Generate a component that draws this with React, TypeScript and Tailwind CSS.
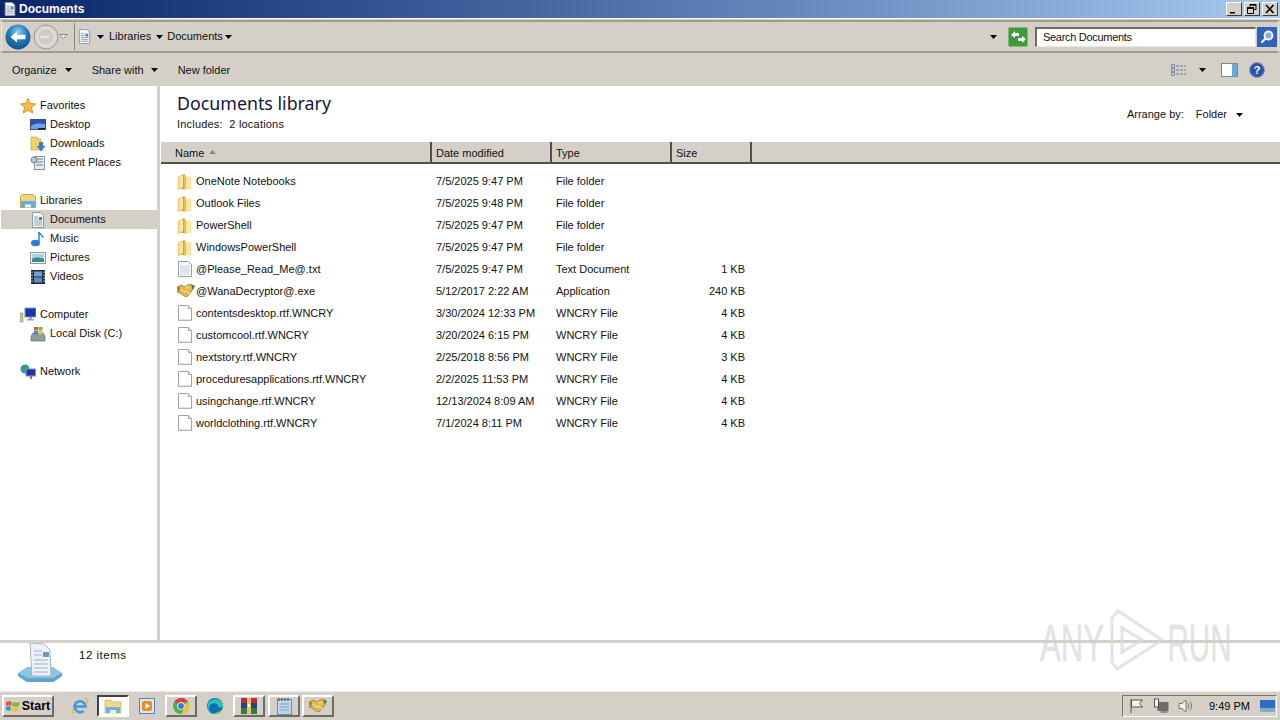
import React from "react";

const Caret = ({ className = "" }: { className?: string }) => (
  <svg width="7" height="4" viewBox="0 0 7 4" className={`shrink-0 ${className}`}>
    <path d="M0 0h7L3.500 4z" fill="#000" />
  </svg>
);

const DocIcon = ({ s = 16 }: { s?: number }) => (
  <svg width={s} height={s} viewBox="0 0 16 16" className="shrink-0">
    <path d="M2.500.5h8l3 3v12h-11z" fill="#f4f7fa" stroke="#8f9aa6" />
    <path d="M4 5h4M4 7h4M4 9h8M4 11h8M4 13h8" stroke="#8fa0b3" />
    <rect x="9" y="5" width="3" height="3" fill="#4f7fa8" />
  </svg>
);

const Folder = () => (
  <svg width="16" height="17" viewBox="0 0 16 17">
    <path d="M1 4 6 1.500V15L1 16.500z" fill="#f3dc8e" stroke="#d8b650" strokeWidth=".5" />
    <path d="M6 1.500h2v14.500H4z" fill="#d8a22e" />
    <path d="M7.500 3.500h7v13h-7z" fill="#f7e7a2" />
    <path d="M3.500 4 6 2.500V14l-2.500 1.500z" fill="#f7e7a2" />
    <path d="M7.500 3.500h1.500v13H7.500z" fill="#e5bb4c" />
  </svg>
);

const TextFile = () => (
  <svg width="16" height="16" viewBox="0 0 16 16">
    <path d="M1.500.5h10l3 3v12h-13z" fill="#f8fafc" stroke="#9aa0a6" />
    <path d="M3 5h10M3 7h10M3 9h10M3 11h10M3 13h10" stroke="#c2cfdf" />
  </svg>
);

const BlankFile = () => (
  <svg width="16" height="16" viewBox="0 0 16 16">
    <path d="M1.500.5h10l3 3v12h-13z" fill="#fff" stroke="#a3a3a3" />
    <path d="M11.500.5v3h3" fill="#eee" stroke="#a3a3a3" />
    <path d="M2 15h12" stroke="#c8c8c8" />
  </svg>
);

const Handshake = () => (
  <svg width="18" height="14" viewBox="0 0 18 14">
    <path d="M0 3l4-2 4 2 4-3 4 2-1 5-5 6-3-1-4-3-3-1z" fill="#e4b94c" stroke="#7d6222" strokeWidth=".6" />
    <path d="M4 5l3 3 3-1 3 3M9 3l3 1" stroke="#fff2b8" fill="none" />
    <path d="M14 0l4 2-2 4z" fill="#4f7d3b" />
    <path d="M0 3l2 6 1-6z" fill="#a87a2a" />
  </svg>
);

const Star = () => (
  <svg width="16" height="16" viewBox="0 0 16 16">
    <path d="M8 .5l2.300 5 5.200.5-4 3.500 1.200 5.500L8 12.200 3.300 15l1.200-5.500-4-3.500 5.200-.5z" fill="#f6bf3f" stroke="#d8913a" />
  </svg>
);

const DesktopIcon = () => (
  <svg width="16" height="16" viewBox="0 0 16 16">
    <rect x=".5" y="2.500" width="15" height="10" fill="#2a55b0" stroke="#444d6a" />
    <path d="M1 9c4-3 8-3 14-2v5H1z" fill="#6fa3e8" />
    <path d="M8 11h7v1.500H8z" fill="#222" />
  </svg>
);

const DownloadsIcon = () => (
  <svg width="16" height="16" viewBox="0 0 16 16">
    <path d="M1 1h6l1 2h3v11H1z" fill="#f0cf6c" stroke="#c29a3a" strokeWidth=".6" />
    <path d="M9 6h4v4h2.500L11 15.500 6.500 10H9z" fill="#2f7fd0" />
  </svg>
);

const RecentIcon = () => (
  <svg width="16" height="16" viewBox="0 0 16 16">
    <rect x="4.500" y="1.500" width="10" height="13" fill="#e8ecf0" stroke="#8a949e" />
    <path d="M6 4h7M6 7h7M6 10h7" stroke="#8fa2b5" strokeWidth="1.400" />
    <circle cx="4" cy="5" r="3" fill="#b7c6d6" stroke="#768593" />
  </svg>
);

const LibrariesIcon = () => (
  <svg width="16" height="16" viewBox="0 0 16 16">
    <path d="M.5 3.500 2 1.500h11l1 2h1.500v11H.5z" fill="#f0d880" stroke="#c3a747" />
    <path d="M1 8h14v6.500H1z" fill="#5fb0dc" />
    <path d="M5 14.500v-3h6v3" fill="#f0f6fb" />
  </svg>
);

const MusicIcon = () => (
  <svg width="16" height="16" viewBox="0 0 16 16">
    <path d="M9 1v10" stroke="#2f7fd0" strokeWidth="1.500" />
    <path d="M9 1c1 3 4 3 4 6" stroke="#2f7fd0" fill="none" strokeWidth="1.300" />
    <ellipse cx="5.500" cy="12" rx="4.500" ry="3.200" fill="#2a7fd0" />
  </svg>
);

const PicturesIcon = () => (
  <svg width="16" height="16" viewBox="0 0 16 16">
    <rect x=".5" y="2.500" width="15" height="11" fill="#eef2f5" stroke="#8d98a3" />
    <rect x="2" y="4" width="12" height="8" fill="#a7cfe8" />
    <path d="M2 9c3-2 7-2 12 0v3H2z" fill="#3f8a7a" />
  </svg>
);

const VideosIcon = () => (
  <svg width="16" height="16" viewBox="0 0 16 16">
    <rect x="1" y="1" width="14" height="14" fill="#222c38" />
    <rect x="4" y="2.500" width="8" height="5" fill="#6fa3d8" />
    <rect x="4" y="8.500" width="8" height="5" fill="#5b8fc4" />
    <path d="M2 2.500v11M14 2.500v11" stroke="#e8e8e8" strokeDasharray="1.500 1.500" />
  </svg>
);

const ComputerIcon = () => (
  <svg width="16" height="16" viewBox="0 0 16 16">
    <rect x="5" y="1" width="11" height="9" fill="#1d33a8" stroke="#8c96a8" />
    <path d="M9 10h3v2h2v1.500H7V12h2z" fill="#9aa4b2" />
    <rect x="0" y="6" width="3" height="9" fill="#b9c89a" stroke="#7c8a6a" strokeWidth=".5" />
  </svg>
);

const DiskIcon = () => (
  <svg width="16" height="16" viewBox="0 0 16 16">
    <path d="M1 10l2-3h10l2 3v5H1z" fill="#8f9aa0" stroke="#5c666c" strokeWidth=".6" />
    <rect x="4" y="1" width="4" height="3.500" fill="#e45a28" />
    <rect x="8.500" y="1" width="4" height="3.500" fill="#74b83c" />
    <rect x="4" y="5" width="4" height="3.500" fill="#3b8be0" />
    <rect x="8.500" y="5" width="4" height="3.500" fill="#f1c232" />
  </svg>
);

const NetworkIcon = () => (
  <svg width="16" height="16" viewBox="0 0 16 16">
    <circle cx="5" cy="5" r="4.500" fill="#2e9c95" />
    <rect x="6" y="5" width="9.500" height="7" fill="#1d33a8" stroke="#8c96a8" />
    <path d="M10 12h2v3h-2z" fill="#6c7a8c" />
  </svg>
);

const NavItem = ({
  icon,
  label,
  sub,
  active,
}: {
  icon: React.ReactNode;
  label: string;
  sub?: boolean;
  active?: boolean;
}) => (
  <div
    className={`h-[19px] flex items-center gap-[4px] ${sub ? "pl-[30px]" : "pl-[20px]"} ${
      active ? "bg-[#d4d0c8] ml-[1px] !pl-[29px]" : ""
    }`}
  >
    <span className="w-[16px] h-[16px] shrink-0 flex">{icon}</span>
    <span>{label}</span>
  </div>
);

type Row = { icon: React.ReactNode; name: string; date: string; type: string; size: string };
const F = <Folder />;
const B = <BlankFile />;
const rows: Row[] = [
  { icon: F, name: "OneNote Notebooks", date: "7/5/2025 9:47 PM", type: "File folder", size: "" },
  { icon: F, name: "Outlook Files", date: "7/5/2025 9:48 PM", type: "File folder", size: "" },
  { icon: F, name: "PowerShell", date: "7/5/2025 9:47 PM", type: "File folder", size: "" },
  { icon: F, name: "WindowsPowerShell", date: "7/5/2025 9:47 PM", type: "File folder", size: "" },
  { icon: <TextFile />, name: "@Please_Read_Me@.txt", date: "7/5/2025 9:47 PM", type: "Text Document", size: "1 KB" },
  { icon: <Handshake />, name: "@WanaDecryptor@.exe", date: "5/12/2017 2:22 AM", type: "Application", size: "240 KB" },
  { icon: B, name: "contentsdesktop.rtf.WNCRY", date: "3/30/2024 12:33 PM", type: "WNCRY File", size: "4 KB" },
  { icon: B, name: "customcool.rtf.WNCRY", date: "3/20/2024 6:15 PM", type: "WNCRY File", size: "4 KB" },
  { icon: B, name: "nextstory.rtf.WNCRY", date: "2/25/2018 8:56 PM", type: "WNCRY File", size: "3 KB" },
  { icon: B, name: "proceduresapplications.rtf.WNCRY", date: "2/2/2025 11:53 PM", type: "WNCRY File", size: "4 KB" },
  { icon: B, name: "usingchange.rtf.WNCRY", date: "12/13/2024 8:09 AM", type: "WNCRY File", size: "4 KB" },
  { icon: B, name: "worldclothing.rtf.WNCRY", date: "7/1/2024 8:11 PM", type: "WNCRY File", size: "4 KB" },
];

const Head = ({ w, label, sort }: { w: string; label: string; sort?: boolean }) => (
  <div className={`${w} h-full flex items-center gap-[5px] pl-[4px] border-r-2 border-[#555049] shrink-0 pt-[2px]`}>
    <span>{label}</span>
    {sort && (
      <svg width="7" height="4" viewBox="0 0 7 4" className="mb-[2px]">
        <path d="M0 4L3.500 0 7 4z" fill="#8a8a8a" />
      </svg>
    )}
  </div>
);

const TaskBtn = ({ children, active }: { children: React.ReactNode; active?: boolean }) => (
  <div
    className={`w-[32px] h-[22px] flex items-center justify-center border-2 shrink-0 ${
      active
        ? "bg-white border-t-[#404040] border-l-[#404040] border-r-white border-b-white"
        : "bg-[#d4d0c8] border-t-white border-l-white border-r-[#6e6a64] border-b-[#6e6a64]"
    }`}
  >
    {children}
  </div>
);

const IEIcon = () => (
  <svg width="18" height="18" viewBox="0 0 18 18" className="shrink-0">
    <path d="M4 9.500h10.500a5.500 5.500 0 1 0-2 4.500" fill="none" stroke="#3a9ae0" strokeWidth="2.600" />
    <path d="M13 2c4-2 5 1 2 6M5 14c-3 3-5 2-3-2" stroke="#e8b838" strokeWidth="1.200" fill="none" />
  </svg>
);
const ExplorerIcon = () => (
  <svg width="18" height="16" viewBox="0 0 18 16">
    <path d="M1 2h6l1 2h9v11H1z" fill="#efd98a" stroke="#b8a050" strokeWidth=".6" />
    <path d="M2 9h14v6H2z" fill="#6fb4d8" />
    <path d="M6 15v-3h6v3" fill="#e8f2f8" />
  </svg>
);
const MediaIcon = () => (
  <svg width="16" height="16" viewBox="0 0 16 16" className="shrink-0">
    <rect x=".5" y=".5" width="15" height="15" fill="#dfe8f0" stroke="#4f86c0" />
    <rect x="3" y="3" width="10" height="10" rx="2" fill="#ef8a1f" />
    <path d="M6.500 5v6L11 8z" fill="#fff" />
  </svg>
);
const ChromeIcon = () => (
  <svg width="18" height="18" viewBox="0 0 18 18">
    <circle cx="9" cy="9" r="8" fill="#4caf50" />
    <path d="M9 1a8 8 0 0 1 7 4H9a4 4 0 0 0-3.500 2L2.800 4A8 8 0 0 1 9 1z" fill="#e53935" />
    <path d="M16 5a8 8 0 0 1-7 12l3.500-6A4 4 0 0 0 12.500 7z" fill="#fbc02d" />
    <circle cx="9" cy="9" r="3.800" fill="#fff" />
    <circle cx="9" cy="9" r="2.900" fill="#2f78e0" />
  </svg>
);
const EdgeIcon = () => (
  <svg width="18" height="18" viewBox="0 0 18 18" className="shrink-0">
    <circle cx="9" cy="9" r="8" fill="#0f6fb8" />
    <path d="M2 7c2-6 13-7 15 1 0 3-4 3-5 1 0-3-6-4-8-1-2 3-1 7 3 9-3 0-6-3-5-10z" fill="#2fc4b2" />
    <path d="M8 17c4 1 7-1 8-4-3 2-6 2-8 4z" fill="#69d84f" />
  </svg>
);
const RarIcon = () => (
  <svg width="18" height="16" viewBox="0 0 18 16">
    <rect x="1" y="0" width="16" height="5" fill="#b62d3c" />
    <rect x="1" y="5" width="16" height="5" fill="#30407f" />
    <rect x="1" y="10" width="16" height="6" fill="#2f7d45" />
    <rect x="7" y="0" width="4" height="16" fill="#e4c56a" />
    <rect x="8" y="6" width="2" height="3" fill="#fff" />
  </svg>
);
const NotepadIcon = () => (
  <svg width="15" height="17" viewBox="0 0 15 17">
    <rect x=".5" y="1.500" width="14" height="15" fill="#bcd6ec" stroke="#6e8ca8" />
    <path d="M2 0v3M5 0v3M8 0v3M11 0v3" stroke="#444" />
    <path d="M3 6h9M3 9h9M3 12h9" stroke="#7aa0c4" />
  </svg>
);

export default function App() {
  return (
    <div className="relative w-[1280px] h-[720px] overflow-hidden bg-white flex flex-col text-[11px] text-[#111] font-['Liberation_Sans',sans-serif] leading-none">
      {/* Title bar */}
      <div className="h-[18px] shrink-0 flex items-center bg-gradient-to-r from-[#0a246a] to-[#a6caf0] pl-[3px] pr-[2px] gap-[2px]">
        <DocIcon s={14} />
        <span className="text-white font-bold text-[12px]">Documents</span>
        <div className="ml-auto flex gap-[2px]">
          {["min", "max", "close"].map((k) => (
            <div
              key={k}
              className="w-[16px] h-[14px] bg-[#d4d0c8] border border-t-white border-l-white border-r-[#404040] border-b-[#404040] flex items-center justify-center"
            >
              <svg width="10" height="10" viewBox="0 0 10 10">
                {k === "min" && <path d="M1 8h5v1.500H1z" fill="#000" />}
                {k === "max" && (
                  <g fill="none" stroke="#000">
                    <path d="M3 2.500V.5h6v5H7" />
                    <path d="M3 1.200h6" />
                    <rect x=".5" y="3.500" width="6" height="6" />
                    <path d="M1 4.500h5" />
                  </g>
                )}
                {k === "close" && <path d="M1 1l7.500 8M8.500 1L1 9" stroke="#000" strokeWidth="1.600" />}
              </svg>
            </div>
          ))}
        </div>
      </div>

      {/* Address bar */}
      <div className="h-[36px] shrink-0 bg-[#d4d0c8] border-t border-white flex items-center px-[1px]">
        <div className="flex-1 h-[33px] flex items-center border-y-2 border-t-[#a09c94] border-b-[#a09c94] border-x border-x-[#e8e6e0] pl-[3px] pr-[1px]">
          <svg width="26" height="26" viewBox="0 0 26 26" className="shrink-0">
            <defs>
              <radialGradient id="bk" cx="50%" cy="30%" r="75%">
                <stop offset="0" stopColor="#8fd0f0" />
                <stop offset=".5" stopColor="#1f78b8" />
                <stop offset="1" stopColor="#0d4f86" />
              </radialGradient>
            </defs>
            <circle cx="13" cy="13" r="12.500" fill="url(#bk)" />
            <path d="M5.500 13l6.500-5.500v3.300h8.500v4.400H12v3.300z" fill="#fff" />
          </svg>
          <svg width="26" height="26" viewBox="0 0 26 26" className="shrink-0 ml-[2px]">
            <circle cx="13" cy="13" r="12" fill="#d8d6d0" stroke="#9a968e" />
            <circle cx="13" cy="13" r="8.500" fill="#cfccc5" stroke="#e8e6e0" />
            <path d="M7 12h9v2H7z" fill="#e8e6e0" />
          </svg>
          <svg width="9" height="5" viewBox="0 0 9 5" className="shrink-0">
            <path d="M.5.500h8L4.500 4.500z" fill="#efece6" stroke="#8a8a8a" />
          </svg>
          <div className="ml-[6px] flex-1 h-[27px] flex items-center border-l border-[#8a867e] pl-[2px] pr-[5px]">
            <DocIcon s={15} />
            <Caret className="ml-[5px]" />
            <span className="ml-[5px] mb-[1px]">Libraries</span>
            <Caret className="ml-[5px]" />
            <span className="ml-[4px] mb-[1px]">Documents</span>
            <Caret className="ml-[2px]" />
            <Caret className="ml-auto" />
          </div>
          <div className="w-[20px] h-[20px] ml-[6px] mr-[7px] rounded-[2px] bg-[#3f9a3a] border border-[#7fb97a] flex items-center justify-center shrink-0">
            <svg width="15" height="12" viewBox="0 0 15 12">
              <path d="M0 4l4-4v2h4v3H4v2zM15 8l-4 4v-2H7V7h4V5z" fill="#fff" />
            </svg>
          </div>
          <div className="w-[221px] h-[20px] bg-white border-t-2 border-l-2 border-[#6e6a64] border-r border-b border-r-[#e8e6e0] border-b-[#e8e6e0] flex items-center pl-[6px] shrink-0 tracking-[-0.3px]">
            Search Documents
          </div>
          <div className="w-[20px] h-[20px] ml-[1px] bg-[#2f62b8] flex items-center justify-center shrink-0">
            <svg width="16" height="16" viewBox="0 0 16 16" fill="none">
              <circle cx="9.500" cy="6.500" r="4" stroke="#fff" strokeWidth="1.800" fill="#7fb0e8" />
              <path d="M6.500 9.500l-4 4" stroke="#fff" strokeWidth="2.200" />
            </svg>
          </div>
        </div>
      </div>

      {/* Command bar */}
      <div className="h-[32px] shrink-0 bg-[#d4d0c8] flex items-center pl-[12px] pr-[15px]">
        <span>Organize</span>
        <Caret className="ml-[8px]" />
        <span className="ml-[20px]">Share with</span>
        <Caret className="ml-[7px]" />
        <span className="ml-[20px]">New folder</span>
        <svg width="16" height="12" viewBox="0 0 16 12" className="ml-auto" fill="none">
          <path d="M.5.500h3v3h-3zM.5 4.500h3v3h-3zM.5 8.500h3v3h-3z" stroke="#7a8a9a" />
          <path d="M5 2h10M5 6h10M5 10h10" stroke="#6a7a8a" strokeDasharray="3 1" />
        </svg>
        <Caret className="ml-[12px]" />
        <svg width="17" height="14" viewBox="0 0 17 14" className="ml-[15px]">
          <rect x=".5" y=".5" width="16" height="13" fill="#fff" stroke="#6a8aa8" />
          <rect x="11" y="1" width="5" height="12" fill="#6ba6d8" />
        </svg>
        <svg width="16" height="16" viewBox="0 0 16 16" className="ml-[11px]">
          <circle cx="8" cy="8" r="7.500" fill="#2b55a8" stroke="#8a9ac0" />
          <text x="8" y="12" textAnchor="middle" fontSize="11" fontWeight="700" fill="#fff" fontFamily="Liberation Sans">?</text>
        </svg>
      </div>

      {/* Main */}
      <div className="h-[554px] shrink-0 flex">
        <div className="w-[157px] shrink-0 bg-white pt-[10px] pl-0">
          <NavItem icon={<Star />} label="Favorites" />
          <NavItem sub icon={<DesktopIcon />} label="Desktop" />
          <NavItem sub icon={<DownloadsIcon />} label="Downloads" />
          <NavItem sub icon={<RecentIcon />} label="Recent Places" />
          <div className="h-[19px]" />
          <NavItem icon={<LibrariesIcon />} label="Libraries" />
          <NavItem sub active icon={<DocIcon />} label="Documents" />
          <NavItem sub icon={<MusicIcon />} label="Music" />
          <NavItem sub icon={<PicturesIcon />} label="Pictures" />
          <NavItem sub icon={<VideosIcon />} label="Videos" />
          <div className="h-[19px]" />
          <NavItem icon={<ComputerIcon />} label="Computer" />
          <NavItem sub icon={<DiskIcon />} label="Local Disk (C:)" />
          <div className="h-[19px]" />
          <NavItem icon={<NetworkIcon />} label="Network" />
        </div>
        <div className="w-[3px] shrink-0 bg-[#d4d0c8]" />
        <div className="flex-1 flex flex-col min-w-0 bg-white pl-[1px]">
          <div className="h-[56px] shrink-0 flex items-start justify-between pl-[16px] pr-[37px]">
            <div className="pt-[8px]">
              <div className="text-[17.800px] font-['Noto_Sans',sans-serif] text-[#15153a] leading-[18px]">Documents library</div>
              <div className="mt-[7px] tracking-[0.2px]">Includes:&nbsp; 2 locations</div>
            </div>
            <div className="flex items-center pt-[23px]">
              <span>Arrange by:</span>
              <span className="ml-[12px]">Folder</span>
              <Caret className="ml-[9px]" />
            </div>
          </div>
          <div className="h-[22px] shrink-0 bg-[#d4d0c8] border-b-2 border-[#555049] flex items-stretch">
            <Head w="w-[271px] pl-[14px]" label="Name" sort />
            <Head w="w-[120px]" label="Date modified" />
            <Head w="w-[120px]" label="Type" />
            <Head w="w-[80px]" label="Size" />
          </div>
          <div className="pt-[6px]">
            {rows.map((r) => (
              <div key={r.name} className="h-[22px] flex items-center">
                <div className="w-[271px] flex items-center pl-[16px] shrink-0">
                  <span className="w-[19px] flex shrink-0">{r.icon}</span>
                  <span className="whitespace-nowrap">{r.name}</span>
                </div>
                <div className="w-[120px] pl-[4px] shrink-0 whitespace-nowrap">{r.date}</div>
                <div className="w-[120px] pl-[4px] shrink-0 whitespace-nowrap">{r.type}</div>
                <div className="w-[80px] pr-[7px] text-right shrink-0 whitespace-nowrap">{r.size}</div>
              </div>
            ))}
          </div>
        </div>
      </div>

      {/* Details pane */}
      <div className="h-[51px] shrink-0 bg-white border-t-[3px] border-[#d4d0c8] flex items-start pl-[17px]">
        <svg width="46" height="40" viewBox="0 0 46 40" className="shrink-0">
          <path d="M1 30l9-6h26l9 6v3l-9 6H10l-9-6z" fill="#8cc4e4" />
          <path d="M1 30l9 5h26l9-5v3l-9 6H10l-9-6z" fill="#5fa4cc" />
          <path d="M13 0l14 1 6 6 1 26H15z" fill="#eef2f8" stroke="#a8b4c4" />
          <path d="M17 8h8M17 12h8M17 17h14M17 21h14M17 25h14M17 29h14" stroke="#a0b0c4" strokeWidth="1.200" />
          <rect x="26" y="9" width="6" height="5" fill="#6a98b8" />
        </svg>
        <span className="ml-[16px] mt-[7px] tracking-[0.5px] text-[11.500px]">12 items</span>
      </div>

      {/* Taskbar */}
      <div className="h-[29px] shrink-0 bg-[#d4d0c8] border-t border-[#efece6] flex items-center pl-[2px] pr-[3px]">
        <div className="w-[52px] h-[22px] flex items-center justify-center gap-[2px] border-2 border-t-white border-l-white border-r-[#6e6a64] border-b-[#6e6a64] shrink-0">
          <svg width="14" height="14" viewBox="0 0 14 14" className="shrink-0">
            <path d="M0 3c2-1 4-1 6 0l-1 4c-2-1-3-1-5 0z" fill="#e4572e" />
            <path d="M7 3c2 1 4 1 7 0l-1 4c-2 1-4 1-7 0z" fill="#7ab648" />
            <path d="M0 8c2-1 3-1 5 0l-1 4c-2-1-3-1-5 0z" fill="#3d8fe0" />
            <path d="M6 8c2 1 4 1 7 0l-1 4c-2 1-4 1-7 0z" fill="#f4c430" />
          </svg>
          <span className="font-bold text-black text-[12.500px]">Start</span>
        </div>
        <div className="w-[17px] shrink-0" />
        <IEIcon />
        <div className="w-[8px] shrink-0" />
        <TaskBtn active><ExplorerIcon /></TaskBtn>
        <div className="w-[10px] shrink-0" />
        <MediaIcon />
        <div className="w-[10px] shrink-0" />
        <TaskBtn><ChromeIcon /></TaskBtn>
        <div className="w-[9px] shrink-0" />
        <EdgeIcon />
        <div className="w-[9px] shrink-0" />
        <TaskBtn><RarIcon /></TaskBtn>
        <div className="w-[3px] shrink-0" />
        <TaskBtn><NotepadIcon /></TaskBtn>
        <div className="w-[2px] shrink-0" />
        <TaskBtn><Handshake /></TaskBtn>
        <div className="ml-auto w-[155px] h-[22px] border border-t-[#7a766e] border-l-[#7a766e] border-r-white border-b-white flex items-center pl-[5px] pr-[1px] shrink-0">
          <svg width="17" height="16" viewBox="0 0 16 16" fill="none" stroke="#55524c" className="shrink-0">
            <path d="M2.500 1v14" />
            <path d="M3 2h11l-3 3.500L14 9H3z" fill="#f4f2ec" />
          </svg>
          <svg width="17" height="16" viewBox="0 0 16 16" className="ml-[8px] shrink-0">
            <rect x="4" y="4" width="11" height="9" fill="#6e6c66" />
            <rect x="1" y="1" width="4" height="8" fill="#f4f2ec" stroke="#55524c" />
            <path d="M7 14h7" stroke="#55524c" />
          </svg>
          <svg width="16" height="16" viewBox="0 0 16 16" className="ml-[7px] shrink-0" fill="none" stroke="#77746c">
            <path d="M2 5.500h3L9 2v12l-4-3.500H2z" fill="#f4f2ec" />
            <path d="M11 5c1 2 1 4 0 6M13 3.500c2 3 2 6 0 9" />
          </svg>
          <span className="ml-[16px] text-black">9:49 PM</span>
          <svg width="15" height="12" viewBox="0 0 15 12" className="ml-auto shrink-0">
            <rect width="15" height="12" fill="#2a6fc4" />
            <rect y="8" width="15" height="4" fill="#89a8c8" />
          </svg>
        </div>
      </div>

      {/* Watermark */}
      <div className="absolute left-[1040px] top-[608px] w-[192px] h-[64px] pointer-events-none text-[#c8c8c8]/50">
        <span className="absolute left-0 top-[9px] text-[52px] scale-x-[.6] origin-left [-webkit-text-stroke:1px_#e0e0e080]">ANY</span>
        <svg width="60" height="64" viewBox="0 0 60 64" fill="none" stroke="#d8d8d8" strokeOpacity=".7" strokeWidth="3" className="absolute left-[68px] top-0">
          <path d="M4 10v44l5 7 45-29L10 3z" />
          <path d="M14 20v24l20-12z" />
        </svg>
        <span className="absolute right-0 top-[9px] text-[52px] scale-x-[.57] origin-right [-webkit-text-stroke:1px_#e0e0e080]">RUN</span>
      </div>
    </div>
  );
}
